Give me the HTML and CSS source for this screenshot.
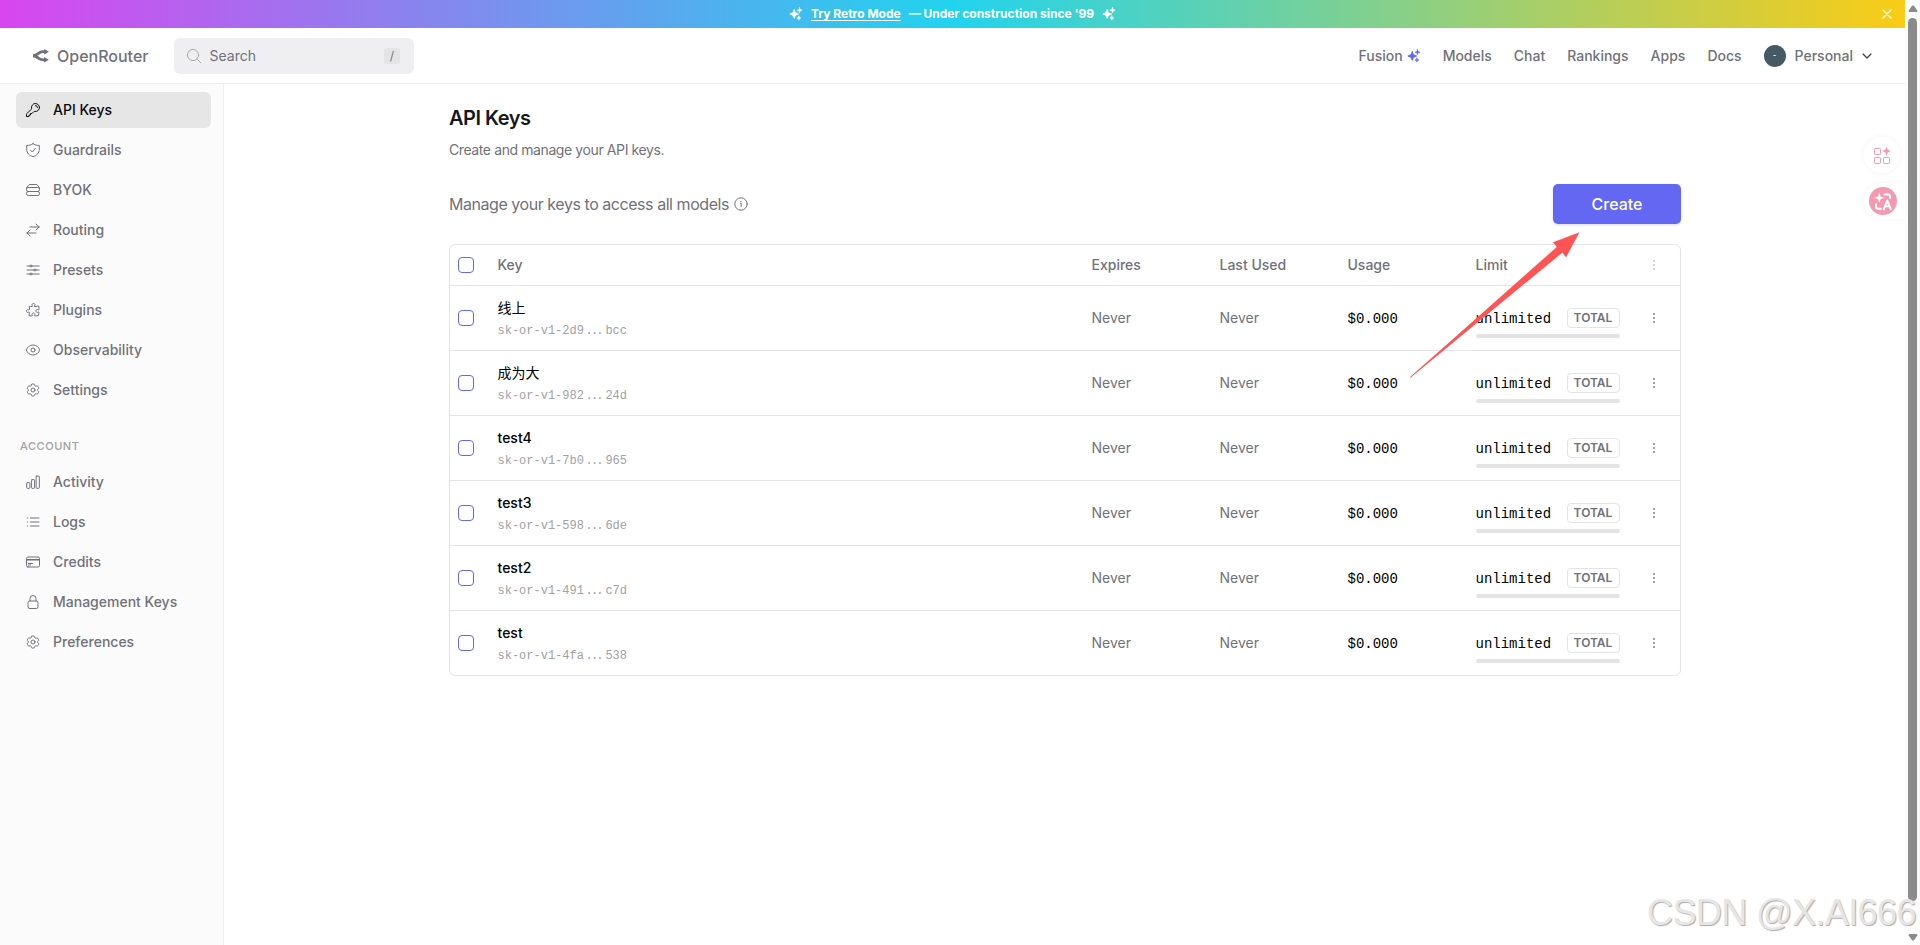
FILE: index.html
```
<!DOCTYPE html>
<html lang="en">
<head>
    <meta charset="UTF-8">
    <meta name="viewport" content="width=device-width, initial-scale=1.0">
    <title>API Keys | OpenRouter</title>
    <link rel="stylesheet" href="styles.css">
</head>
<body>

<!-- shared icons -->
<svg class="sprite" width="0" height="0">
    <symbol id="sparkles" viewBox="0 0 24 24">
        <path fill="currentColor" d="M9 4.5a.75.75 0 0 1 .721.544l.813 2.846a3.75 3.75 0 0 0 2.576 2.576l2.846.813a.75.75 0 0 1 0 1.442l-2.846.813a3.75 3.75 0 0 0-2.576 2.576l-.813 2.846a.75.75 0 0 1-1.442 0l-.813-2.846a3.75 3.75 0 0 0-2.576-2.576l-2.846-.813a.75.75 0 0 1 0-1.442l2.846-.813A3.75 3.75 0 0 0 7.466 7.89l.813-2.846A.75.75 0 0 1 9 4.5ZM18 1l1.1 3.4L22.500 5.500l-3.400 1.100L18 10l-1.100-3.400L13.500 5.500l3.400-1.100ZM17 15.500l.9 2.600 2.600.9-2.600.9L17 22.500l-.9-2.600-2.600-.9 2.600-.9Z" stroke="currentColor" stroke-width="1"/>
    </symbol>
    <symbol id="cog" viewBox="0 0 24 24">
        <path d="M9.594 3.94c.09-.542.56-.94 1.11-.94h2.593c.55 0 1.02.398 1.11.94l.213 1.281c.063.374.313.686.645.87.074.04.147.083.22.127.325.196.72.257 1.075.124l1.217-.456a1.125 1.125 0 0 1 1.37.49l1.296 2.247a1.125 1.125 0 0 1-.26 1.431l-1.003.827c-.293.241-.438.613-.43.992a7.723 7.723 0 0 1 0 .255c-.008.378.137.75.43.991l1.004.827c.424.35.534.955.26 1.43l-1.298 2.247a1.125 1.125 0 0 1-1.369.491l-1.217-.456c-.355-.133-.75-.072-1.076.124a6.47 6.47 0 0 1-.22.128c-.331.183-.581.495-.644.869l-.213 1.281c-.09.543-.56.94-1.11.94h-2.594c-.55 0-1.019-.398-1.11-.94l-.213-1.281c-.062-.374-.312-.686-.644-.87a6.52 6.52 0 0 1-.22-.127c-.325-.196-.72-.257-1.076-.124l-1.217.456a1.125 1.125 0 0 1-1.369-.49l-1.297-2.247a1.125 1.125 0 0 1 .26-1.431l1.004-.827c.292-.24.437-.613.43-.991a6.932 6.932 0 0 1 0-.255c.007-.38-.138-.751-.43-.992l-1.004-.827a1.125 1.125 0 0 1-.26-1.43l1.297-2.247a1.125 1.125 0 0 1 1.37-.491l1.216.456c.356.133.751.072 1.076-.124.072-.044.146-.086.22-.128.332-.183.582-.495.644-.869l.214-1.28Z"/>
        <circle cx="12" cy="12" r="3"/>
    </symbol>
    <symbol id="dots" viewBox="0 0 4 12">
        <path fill="currentColor" d="M1 1h2v2H1zM1 5h2v2H1zM1 9h2v2H1z"/>
    </symbol>
</svg>

<div class="app">
<div class="page">

    <div class="banner">
        <svg class="sparkle"><use href="#sparkles"/></svg>
        <a class="retro">Try Retro Mode</a>
        <span class="since">— Under construction since '99</span>
        <svg class="sparkle"><use href="#sparkles"/></svg>
        <svg class="close" viewBox="0 0 10 10"><path d="M1 1l8 8M9 1l-8 8"/></svg>
    </div>

    <header class="header">
        <a class="logo">
            <svg viewBox="0 0 512 512">
                <path class="line" d="M3 248.945C18 248.945 76 236 106 219C136 202 136 202 198 158C276.497 102.293 332 120.945 423 120.945"/>
                <path class="head" d="M511 121.5L357.25 210.268L357.25 32.7324Z"/>
                <path class="line" d="M0 249C15 249 73 261.945 103 278.945C133 295.945 133 295.945 195 339.945C273.497 395.652 329 377 420 377"/>
                <path class="head" d="M508 376.445L354.25 287.678L354.25 465.213Z"/>
            </svg>
            <span>OpenRouter</span>
        </a>
        <div class="search">
            <svg viewBox="0 0 16 16"><circle cx="7" cy="7" r="5.600"/><path d="M11.200 11.200L14.800 14.800"/></svg>
            <span>Search</span>
            <kbd>/</kbd>
        </div>
        <nav class="top-nav">
            <a class="fusion">Fusion <svg class="sparkle"><use href="#sparkles"/></svg></a>
            <a>Models</a>
            <a>Chat</a>
            <a>Rankings</a>
            <a>Apps</a>
            <a>Docs</a>
            <a class="user">
                <span class="avatar">-</span>
                Personal
                <svg class="chevron" viewBox="0 0 10 10"><path d="M1 3l4 4 4-4"/></svg>
            </a>
        </nav>
    </header>

    <div class="body">
        <aside class="sidebar">
            <a class="item active">
                <svg class="icon" viewBox="0 0 24 24"><path d="M15.75 5.25a3 3 0 0 1 3 3m3 0a6 6 0 0 1-7.029 5.912c-.563-.097-1.159.026-1.563.43L10.5 17.25H8.25v2.25H6v2.25H2.25v-2.818c0-.597.237-1.17.659-1.591l6.499-6.499c.404-.404.527-1 .43-1.563A6 6 0 1 1 21.75 8.25Z"/></svg>
                API Keys
            </a>
            <a class="item">
                <svg class="icon" viewBox="0 0 24 24"><path d="M12 2.500C9.500 4.500 6 5.200 2.500 5.200V11c0 5.500 4 9.500 9.500 11 5.500-1.500 9.500-5.500 9.500-11V5.200C18 5.200 14.500 4.500 12 2.500ZM8.500 12.500L11 15l4.500-5.500"/></svg>
                Guardrails
            </a>
            <a class="item">
                <svg class="icon" viewBox="0 0 24 24"><path d="M2.250 10V8.500L5.200 4.800Q6 3.750 7.500 3.750h9q1.500 0 2.300 1.050l2.950 3.700V10"/><rect x="2.250" y="8.250" width="19.500" height="6" rx="2.600"/><rect x="2.250" y="14.250" width="19.500" height="6" rx="2.600"/></svg>
                BYOK
            </a>
            <a class="item">
                <svg class="icon" viewBox="0 0 24 24"><path d="M7.500 21L3 16.500m0 0L7.500 12M3 16.500h13.500m0-13.500L21 7.500m0 0L16.500 12M21 7.500H7.500"/></svg>
                Routing
            </a>
            <a class="item">
                <svg class="icon" viewBox="0 0 24 24"><path d="M10.500 6h10.750M10.500 6a1.500 1.500 0 1 1-3 0m3 0a1.500 1.500 0 1 0-3 0M3 6h4.500m3 12h10.750m-10.750 0a1.500 1.500 0 0 1-3 0m3 0a1.500 1.500 0 0 0-3 0M3 18h4.500m9-6h4.750m-4.750 0a1.500 1.500 0 0 1-3 0m3 0a1.500 1.500 0 0 0-3 0M3 12h10.500"/></svg>
                Presets
            </a>
            <a class="item">
                <svg class="icon" viewBox="0 0 24 24"><path d="M14.25 6.087c0-.355.186-.676.401-.959.221-.29.349-.634.349-1.003 0-1.036-1.007-1.875-2.25-1.875s-2.25.84-2.25 1.875c0 .369.128.713.349 1.003.215.283.401.604.401.959v0a.64.64 0 0 1-.657.643 48.39 48.39 0 0 1-4.163-.3c.186 1.613.293 3.25.315 4.907a.656.656 0 0 1-.658.663v0c-.355 0-.676-.186-.959-.401a1.647 1.647 0 0 0-1.003-.349c-1.036 0-1.875 1.007-1.875 2.25s.84 2.25 1.875 2.25c.369 0 .713-.128 1.003-.349.283-.215.604-.401.959-.401v0c.31 0 .555.26.532.57a48.039 48.039 0 0 1-.642 5.056c1.518.19 3.058.309 4.616.354a.64.64 0 0 0 .657-.643v0c0-.355-.186-.676-.401-.959a1.647 1.647 0 0 1-.349-1.003c0-1.035 1.008-1.875 2.25-1.875 1.243 0 2.25.84 2.25 1.875 0 .369-.128.713-.349 1.003-.215.283-.4.604-.4.959v0c0 .333.277.599.61.58a48.1 48.1 0 0 0 5.427-.63 48.05 48.05 0 0 0 .582-4.717.532.532 0 0 0-.533-.57v0c-.355 0-.676.186-.959.401-.29.221-.634.349-1.003.349-1.035 0-1.875-1.007-1.875-2.25s.84-2.25 1.875-2.25c.37 0 .713.128 1.003.349.283.215.604.401.96.401v0a.656.656 0 0 0 .658-.663 48.422 48.422 0 0 0-.37-5.36c-1.886.342-3.81.574-5.766.689a.578.578 0 0 1-.61-.58v0Z"/></svg>
                Plugins
            </a>
            <a class="item">
                <svg class="icon" viewBox="0 0 24 24"><path d="M2.036 12.322a1.012 1.012 0 0 1 0-.639C3.423 7.51 7.36 4.5 12 4.5c4.638 0 8.573 3.007 9.963 7.178.07.207.07.431 0 .639C20.577 16.49 16.64 19.5 12 19.5c-4.638 0-8.573-3.007-9.963-7.178Z"/><circle cx="12" cy="12" r="3"/></svg>
                Observability
            </a>
            <a class="item">
                <svg class="icon"><use href="#cog"/></svg>
                Settings
            </a>

            <div class="group">ACCOUNT</div>

            <a class="item">
                <svg class="icon" viewBox="0 0 24 24"><rect x="2.500" y="13" width="4.800" height="8.500" rx="1.100"/><rect x="9.600" y="8.500" width="4.800" height="13" rx="1.100"/><rect x="16.700" y="3" width="4.800" height="18.500" rx="1.100"/></svg>
                Activity
            </a>
            <a class="item">
                <svg class="icon" viewBox="0 0 24 24"><path d="M8.250 6h12.750M8.250 12h12.750M8.250 18h12.750M3.400 6h.7M3.400 12h.7M3.400 18h.7"/></svg>
                Logs
            </a>
            <a class="item">
                <svg class="icon" viewBox="0 0 24 24"><path d="M2.250 8.250h19.500M2.250 9h19.500m-16.500 5.250h6m-6 2.250h3m-3.750 3h15a2.250 2.250 0 0 0 2.250-2.250V6.750A2.250 2.250 0 0 0 19.500 4.500h-15a2.250 2.250 0 0 0-2.250 2.250v10.500A2.250 2.250 0 0 0 4.500 19.500Z"/></svg>
                Credits
            </a>
            <a class="item">
                <svg class="icon" viewBox="0 0 24 24"><path d="M16.500 10.500V6.750a4.500 4.500 0 1 0-9 0v3.750m-.75 11.250h10.500a2.250 2.250 0 0 0 2.250-2.250v-6.750a2.250 2.250 0 0 0-2.250-2.250H6.750a2.250 2.250 0 0 0-2.250 2.250v6.750a2.250 2.250 0 0 0 2.250 2.250Z"/></svg>
                Management Keys
            </a>
            <a class="item">
                <svg class="icon"><use href="#cog"/></svg>
                Preferences
            </a>
        </aside>

        <main class="main">
            <h1>API Keys</h1>
            <p class="subtitle">Create and manage your API keys.</p>

            <div class="toolbar">
                <p class="manage">
                    Manage your keys to access all models
                    <svg class="info" viewBox="0 0 16 16"><circle cx="8" cy="8" r="6.200"/><path d="M7.400 7.300h.8v3.200M8 5.300v.5"/></svg>
                </p>
                <button class="create">Create</button>
            </div>

            <div class="table">
                <div class="row head">
                    <span class="check"></span>
                    <div>Key</div>
                    <div>Expires</div>
                    <div>Last Used</div>
                    <div>Usage</div>
                    <div>Limit</div>
                    <svg class="more"><use href="#dots"/></svg>
                </div>
                <div class="row">
                    <span class="check"></span>
                    <div class="key"><b class="cjk">线上</b><code>sk-or-v1-2d9<i>...</i>bcc</code></div>
                    <div>Never</div>
                    <div>Never</div>
                    <div class="usage">$0.000</div>
                    <div class="limit"><div class="amount"><span>unlimited</span> <span class="badge">TOTAL</span></div><div class="bar"></div></div>
                    <svg class="more"><use href="#dots"/></svg>
                </div>
                <div class="row">
                    <span class="check"></span>
                    <div class="key"><b class="cjk">成为大</b><code>sk-or-v1-982<i>...</i>24d</code></div>
                    <div>Never</div>
                    <div>Never</div>
                    <div class="usage">$0.000</div>
                    <div class="limit"><div class="amount"><span>unlimited</span> <span class="badge">TOTAL</span></div><div class="bar"></div></div>
                    <svg class="more"><use href="#dots"/></svg>
                </div>
                <div class="row">
                    <span class="check"></span>
                    <div class="key"><b>test4</b><code>sk-or-v1-7b0<i>...</i>965</code></div>
                    <div>Never</div>
                    <div>Never</div>
                    <div class="usage">$0.000</div>
                    <div class="limit"><div class="amount"><span>unlimited</span> <span class="badge">TOTAL</span></div><div class="bar"></div></div>
                    <svg class="more"><use href="#dots"/></svg>
                </div>
                <div class="row">
                    <span class="check"></span>
                    <div class="key"><b>test3</b><code>sk-or-v1-598<i>...</i>6de</code></div>
                    <div>Never</div>
                    <div>Never</div>
                    <div class="usage">$0.000</div>
                    <div class="limit"><div class="amount"><span>unlimited</span> <span class="badge">TOTAL</span></div><div class="bar"></div></div>
                    <svg class="more"><use href="#dots"/></svg>
                </div>
                <div class="row">
                    <span class="check"></span>
                    <div class="key"><b>test2</b><code>sk-or-v1-491<i>...</i>c7d</code></div>
                    <div>Never</div>
                    <div>Never</div>
                    <div class="usage">$0.000</div>
                    <div class="limit"><div class="amount"><span>unlimited</span> <span class="badge">TOTAL</span></div><div class="bar"></div></div>
                    <svg class="more"><use href="#dots"/></svg>
                </div>
                <div class="row">
                    <span class="check"></span>
                    <div class="key"><b>test</b><code>sk-or-v1-4fa<i>...</i>538</code></div>
                    <div>Never</div>
                    <div>Never</div>
                    <div class="usage">$0.000</div>
                    <div class="limit"><div class="amount"><span>unlimited</span> <span class="badge">TOTAL</span></div><div class="bar"></div></div>
                    <svg class="more"><use href="#dots"/></svg>
                </div>
            </div>
        </main>
    </div>
</div>

<div class="scrollbar">
    <svg viewBox="0 0 10 7"><path d="M4 .800Q5 0 6 .800L9.300 5.500Q9.600 7 8.500 7H1.500Q.4 7 .7 5.500Z"/></svg>
    <div class="thumb"></div>
    <svg viewBox="0 0 10 7"><path d="M4 6.200Q5 7 6 6.200L9.300 1.500Q9.600 0 8.500 0H1.500Q.4 0 .7 1.500Z"/></svg>
</div>
</div>

<!-- browser extension buttons -->
<div class="float float-grid">
    <svg viewBox="0 0 18 18"><rect x="1.500" y="2.500" width="6" height="6" rx=".8"/><rect x="1.500" y="11.500" width="6" height="6" rx=".8"/><rect x="10.500" y="11.500" width="6" height="6" rx=".8"/><path d="M13.500 .8l1.300 3 3 1.300-3 1.300-1.300 3-1.300-3-3-1.300 3-1.300Z"/></svg>
</div>
<div class="float float-translate">
    <svg viewBox="0 0 28 28">
        <circle cx="14" cy="14" r="14"/>
        <path class="star" d="M10.300 5.500l1.300 3.900 3.900 1.300-3.900 1.300-1.300 3.900L9 12l-3.900-1.300L9 9.400Z"/>
        <path class="arc" d="M15.500 7.500h3.500q2 0 2 2V11M7 17v2.500q0 2.200 2.200 2.200H12"/>
        <path class="arc a" d="M14.800 22.300l3.500-8.800 3.500 8.800M16 19.300h4.700"/>
    </svg>
</div>

<svg class="arrow" viewBox="0 0 172 148">
    <path d="M.8 145.200L147.800 15 144 10.200 170.500.3 157 25.500 153.500 20.500 1.800 145.500Z"/>
</svg>

<div class="watermark">CSDN @X.AI666</div>

</body>
</html>
```

FILE: styles.css
```
* {
    box-sizing: border-box;
}

body {
    margin: 0;
    height: 945px;
    overflow: hidden;
    font-family: Inter, "Noto Sans CJK SC", sans-serif;
    font-size: 14px;
    line-height: 20px;
    color: #71717a;
    background-color: #ffffff;
}

h1, p {
    margin: 0;
}

svg {
    flex: none;
    fill: none;
    stroke-linecap: round;
    stroke-linejoin: round;
}

.sprite {
    position: absolute;
}

.app {
    display: flex;
    height: 945px;
}

.page {
    flex: 1;
    display: flex;
    flex-direction: column;
}

/* Retro banner */
.banner {
    position: relative;
    display: flex;
    justify-content: center;
    align-items: center;
    height: 28px;
    font-size: 12px;
    font-weight: 700;
    color: #ffffff;
    background: linear-gradient(to right, #d946ef, #22d3ee, #facc15);
}

.sparkle {
    width: 14px;
    height: 14px;
}

.retro {
    margin-left: 8px;
    text-decoration: underline;
    text-underline-offset: 2px;
}

.since {
    margin: 0 8px;
}

.close {
    position: absolute;
    right: 13px;
    width: 10px;
    height: 10px;
    stroke: #ffffff;
    stroke-width: 1.2;
}

/* Header */
.header {
    display: flex;
    align-items: center;
    height: 56px;
    padding: 0 33px 0 32px;
    border-bottom: 1px solid #efeff1;
    font-weight: 500;
}

.logo {
    display: flex;
    align-items: center;
    width: 142px;
    padding-left: 1px;
    gap: 8px;
    font-size: 16px;
}

.logo svg {
    width: 16px;
    height: 16px;
}

.logo .line {
    stroke: #71717a;
    stroke-width: 90;
    stroke-linecap: butt;
}

.logo .head {
    fill: #71717a;
}

.search {
    display: flex;
    align-items: center;
    width: 240px;
    height: 36px;
    padding: 0 14px 0 12px;
    border-radius: 6px;
    font-weight: 400;
    background-color: #efeff1;
}

.search svg {
    width: 16px;
    height: 16px;
    margin-right: 7.5px;
    stroke: #a9a9ae;
}

.search kbd {
    width: 16px;
    height: 16px;
    margin-left: auto;
    border-radius: 3px;
    font-family: Inter, sans-serif;
    font-size: 12px;
    line-height: 16px;
    text-align: center;
    background-color: #e4e4e7;
}

.top-nav {
    display: flex;
    align-items: center;
    gap: 22px;
    margin-left: auto;
}

.fusion, .user {
    display: flex;
    align-items: center;
}

.fusion .sparkle {
    margin-left: 4px;
    color: #6467f2;
}

.avatar {
    width: 22px;
    height: 22px;
    margin-right: 9px;
    border-radius: 50%;
    font-size: 8px;
    line-height: 21px;
    text-align: center;
    color: #ffffff;
    background-color: #455a64;
}

.chevron {
    width: 10px;
    height: 10px;
    margin-left: 9px;
    stroke: #3f3f46;
    stroke-width: 1.2;
}

/* Sidebar */
.body {
    flex: 1;
    display: flex;
}

.sidebar {
    display: flex;
    flex-direction: column;
    gap: 4px;
    width: 224px;
    padding: 8px 12px 0 16px;
    border-right: 1px solid #efeff1;
    background-color: #fbfbfb;
}

.item {
    display: flex;
    align-items: center;
    gap: 12px;
    height: 36px;
    padding-left: 9px;
    border-radius: 6px;
    font-weight: 500;
}

.item.active {
    color: #09090b;
    background-color: #e6e6e6;
}

.icon {
    width: 16px;
    height: 16px;
    stroke: currentColor;
    stroke-width: 1.5;
}

.group {
    margin-top: 24px;
    padding-left: 4px;
    height: 24px;
    font-size: 11px;
    font-weight: 500;
    letter-spacing: 0.55px;
    color: #a1a1a6;
}

/* Main content */
.main {
    width: 1232px;
    margin-left: 225px;
    padding-top: 20px;
}

h1 {
    font-size: 20px;
    font-weight: 600;
    line-height: 28px;
    letter-spacing: -0.5px;
    color: #18181b;
}

.subtitle {
    margin-top: 8px;
    letter-spacing: -0.4px;
}

.toolbar {
    display: flex;
    justify-content: space-between;
    align-items: center;
    margin: 24px 0 20px;
}

.manage {
    display: flex;
    align-items: center;
    gap: 4px;
    font-size: 16px;
    letter-spacing: -0.45px;
}

.info {
    width: 16px;
    height: 16px;
    stroke: #71717a;
}

.create {
    width: 128px;
    height: 40px;
    border: none;
    border-radius: 5px;
    font-family: inherit;
    font-size: 16px;
    font-weight: 500;
    color: #ffffff;
    background-color: #6467f2;
    box-shadow: 0 1px 3px rgba(0, 0, 0, 0.15);
}

.table {
    border: 1px solid #e4e4e7;
    border-radius: 6px;
}

.row {
    display: grid;
    grid-template-columns: 39.5px 594px 128px 128px 128px 172.5px 12px;
    align-items: center;
    height: 65px;
    padding-left: 8px;
    border-bottom: 1px solid #e4e4e7;
}

.row:last-child {
    height: 64px;
    border-bottom: none;
}

.row.head {
    height: 41px;
    font-weight: 500;
}

.check {
    width: 16px;
    height: 16px;
    border: 1px solid #6467f2;
    border-radius: 4px;
}

.key {
    display: flex;
    flex-direction: column;
    gap: 3px;
    padding-top: 2px;
}

.key b {
    font-weight: 500;
    color: #000000;
}

.key .cjk {
    font-weight: 400;
}

.key code {
    font-family: "Liberation Mono", monospace;
    font-size: 12px;
    color: #a1a1a6;
}

.key i {
    display: inline-block;
    width: 21.5px;
    padding-right: 2px;
    font-style: normal;
    letter-spacing: -1.8px;
    text-align: center;
}

.usage, .amount {
    font-family: "Liberation Mono", monospace;
    color: #000000;
}

.usage, .amount span:first-child {
    padding-top: 2px;
}

.limit {
    width: 144px;
    padding-top: 20px;
}

.limit .amount {
    display: flex;
    justify-content: space-between;
    align-items: center;
    height: 20px;
    margin-top: -10px;
}

.badge {
    width: 53px;
    height: 20px;
    border: 1px solid #e4e4e7;
    border-radius: 4px;
    font-family: Inter, sans-serif;
    font-size: 12px;
    font-weight: 600;
    line-height: 18px;
    text-align: center;
    color: #71717a;
}

.bar {
    height: 4px;
    margin-top: 6px;
    border-radius: 2px;
    background-color: #e4e4e7;
}

.more {
    width: 4px;
    height: 12px;
    margin-left: 4px;
    color: #a1a1a6;
}

.head .more {
    color: #d4d4d8;
}

/* Scrollbar */
.scrollbar {
    display: flex;
    flex-direction: column;
    align-items: center;
    width: 15px;
    padding: 5px 0 4px;
    background-color: #fcfcfc;
}

.scrollbar svg {
    width: 10px;
    height: 7px;
    fill: #8b8b8b;
}

.thumb {
    width: 9px;
    height: 883px;
    margin: 6px 0 auto;
    border-radius: 5px;
    background-color: #8b8b8b;
}

/* Things floating over the page */
.float {
    position: absolute;
    left: 1864px;
    display: flex;
    align-items: center;
    height: 36px;
    background-color: #ffffff;
    box-shadow: 0 0 6px rgba(0, 0, 0, 0.05);
    clip-path: inset(-8px 0 -8px -8px);
}

.float-grid {
    top: 137px;
    width: 36px;
    justify-content: center;
    border-radius: 50%;
    clip-path: none;
}

.float-grid svg {
    width: 18px;
    height: 18px;
    stroke: #f39ab2;
}

.float-grid path {
    fill: #f39ab2;
    stroke: none;
}

.float-translate {
    top: 183px;
    width: 41px;
    padding-left: 5px;
    border-radius: 18px 0 0 18px;
}

.float-translate svg {
    width: 28px;
    height: 28px;
    fill: #f39ab2;
}

.float-translate .star {
    fill: #ffffff;
}

.float-translate .arc {
    fill: none;
    stroke: #ffffff;
    stroke-width: 2;
}

.arrow {
    position: absolute;
    left: 1409px;
    top: 232px;
    width: 172px;
    height: 148px;
    fill: #ff5454;
}

.watermark {
    position: absolute;
    left: 1647px;
    top: 892px;
    font-family: "Liberation Sans", sans-serif;
    font-size: 36px;
    line-height: 42px;
    letter-spacing: -0.6px;
    white-space: nowrap;
    color: #e6e6e6;
    text-shadow: 1px 1px 1px #aaaaaa;
}
```
